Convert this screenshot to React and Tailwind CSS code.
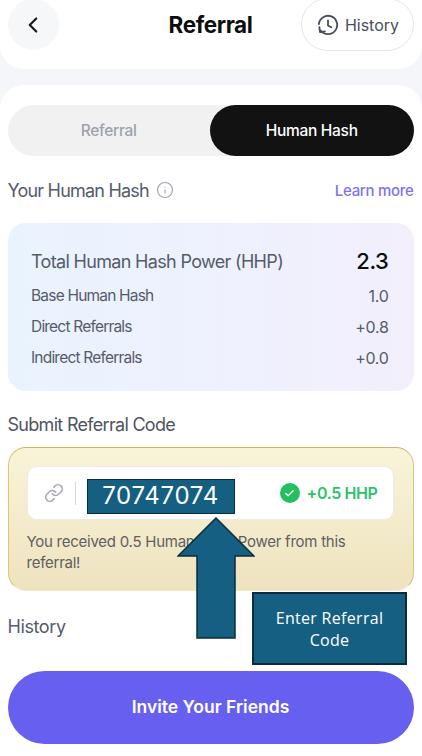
import { ChevronLeft, Info, Link, Check } from "lucide-react";

const font = { fontFamily: "Inter, 'Noto Sans', sans-serif" };

// lucide's History has its arrow at the top, this one sits bottom left
const HistoryIcon = () => (
  <svg width="22" height="22" viewBox="0 0 24 24" fill="none" stroke="currentColor" strokeWidth="2" strokeLinecap="round" strokeLinejoin="round">
    <path d="M4 18 A10 10 0 1 0 2.05 11" />
    <path d="M2.6 14.4 L3.3 19.8 L8.6 19" />
    <path d="M12 7 V12.5 L15.5 14.5" />
  </svg>
);

const Row = ({ label, value }) => (
  <div className="flex justify-between items-center h-[31px] text-[#565b6b]">
    <span className="text-[15.5px] tracking-[-0.8px]">{label}</span>
    <span className="text-[16px] tracking-[-0.3px]">{value}</span>
  </div>
);

const App = () => {
  return (
    <div
      className="relative w-[422px] h-[756px] overflow-hidden bg-[#f5f6fa]"
      style={font}
    >
      {/* header */}
      <div className="flow-root h-[69px] bg-white rounded-b-[24px] pl-[7.5px] pr-[7.5px]">
        <div className="flex items-start justify-between -mt-px">
          <button className="w-[51px] h-[51px] rounded-full bg-[#f6f7f9] flex items-center justify-center text-[#17181c]">
            <ChevronLeft size={26} strokeWidth={2} />
          </button>
          <span className="text-[22.5px] font-bold tracking-[-0.4px] text-[#0c0d10] mt-[9px] ml-[61px]">
            Referral
          </span>
          <div className="w-[113px] h-[53px] -mt-px rounded-[27px] border border-[#e4e5e8] flex items-center justify-center gap-[6px] text-[#4a4e5a]">
            <HistoryIcon />
            <span className="text-[16px]">History</span>
          </div>
        </div>
      </div>

      {/* main sheet */}
      <div className="mt-4 h-[671px] bg-white rounded-t-[24px] pl-[7.5px] pr-[8.5px] pt-5">
        <div className="flex h-[51px] bg-[#f1f1f2] rounded-full">
          <div className="w-[202.5px] flex items-center justify-center text-[15.5px] font-medium tracking-[-0.3px] text-[#9da2ae]">
            Referral
          </div>
          <div className="flex-1 flex items-center justify-center rounded-full bg-[#121212] text-white text-[15.5px] font-medium tracking-[-0.3px]">
            Human Hash
          </div>
        </div>

        <div className="flex items-center justify-between mt-[22px] h-[24px]">
          <div className="flex items-center gap-[7px] text-[#565b6b]">
            <span className="text-[18px] tracking-[-0.8px]">Your Human Hash</span>
            <Info size={18} strokeWidth={1.5} className="text-[#9da2ae]" />
          </div>
          <span className="text-[15px] font-medium tracking-[-0.3px] text-[#7c74f0] mt-[2px]">
            Learn more
          </span>
        </div>

        <div className="mt-[21px] h-[168px] rounded-[18px] bg-gradient-to-r from-[#e9f3fe] to-[#f3effd] pl-[23.5px] pr-[25px] pt-[22px]">
          <div className="flex justify-between items-center h-[32px] text-[#565b6b]">
            <span className="text-[18px] tracking-[-0.67px]">Total Human Hash Power (HHP)</span>
            <span className="text-[22px] font-medium tracking-[-0.4px] text-[#0c0d10]">2.3</span>
          </div>
          <div className="mt-[3px]">
            <Row label="Base Human Hash" value="1.0" />
            <Row label="Direct Referrals" value="+0.8" />
            <Row label="Indirect Referrals" value="+0.0" />
          </div>
        </div>

        <div className="mt-[21px] h-[24px] flex items-center text-[18px] tracking-[-0.7px] text-[#4f5462]">
          Submit Referral Code
        </div>

        <div className="mt-[11px] h-[144px] rounded-[18px] border border-[#d9c67a] border-t-[#cdb964] border-b-[#f3eacb] bg-gradient-to-b from-[#f9f4d9] to-[#eee3bf] pl-[18px] pr-[19px] pt-[18px]">
          <div className="flex items-center h-[54px] rounded-[10px] bg-white border border-[#ececef] pl-[16px] pr-[15px]">
            <Link size={20} strokeWidth={2} className="text-[#a9acb6]" />
            <div className="w-px h-[23px] ml-[11px] bg-[#d8d9dd]" />
            <div className="w-[148px] h-[35px] ml-[11px] mt-[6px] bg-[#156082] border border-[#0b2c3d] flex items-center justify-center text-white text-[24px] tracking-[0.7px]">
              70747074
            </div>
            <div className="ml-auto flex items-center gap-[7px]">
              <div className="w-5 h-5 rounded-full bg-[#22c061] flex items-center justify-center">
                <Check size={11} strokeWidth={3} className="text-white" />
              </div>
              <span className="text-[16px] font-semibold tracking-[-0.4px] text-[#2cc36b]">+0.5 HHP</span>
            </div>
          </div>
          <p className="mt-[11px] text-[15px] leading-[21px] tracking-[-0.25px] text-[#5e5f63]">
            You received 0.5 Human Hash Power from this referral!
          </p>
        </div>

        <div className="mt-[23px] h-[24px] flex items-center text-[18px] tracking-[-0.4px] text-[#565b6b]">
          History
        </div>

        <button className="mt-[33px] w-full h-[73px] rounded-full bg-[#675ff0] text-white text-[17.5px] font-semibold">
          Invite Your Friends
        </button>
      </div>

      {/* annotation arrow over the screenshot */}
      <svg className="absolute left-[177px] top-[517px]" width="78" height="124" viewBox="0 0 78 124">
        <path
          d="M39 1 L77 39 L58 39 L58 121 L20 121 L20 39 L1 39 Z"
          fill="#156082"
          stroke="#0b2c3d"
          strokeWidth="1.5"
        />
      </svg>

      {/* annotation callout */}
      <div className="absolute left-[252px] top-[592px] w-[155px] h-[73px] bg-[#156082] border-2 border-[#0b2c3d] flex items-center justify-center text-center text-white text-[16px] leading-[22px] font-['Open_Sans',sans-serif] tracking-[0.3px]">
        Enter Referral
        <br />
        Code
      </div>
    </div>
  );
};

export default App;
